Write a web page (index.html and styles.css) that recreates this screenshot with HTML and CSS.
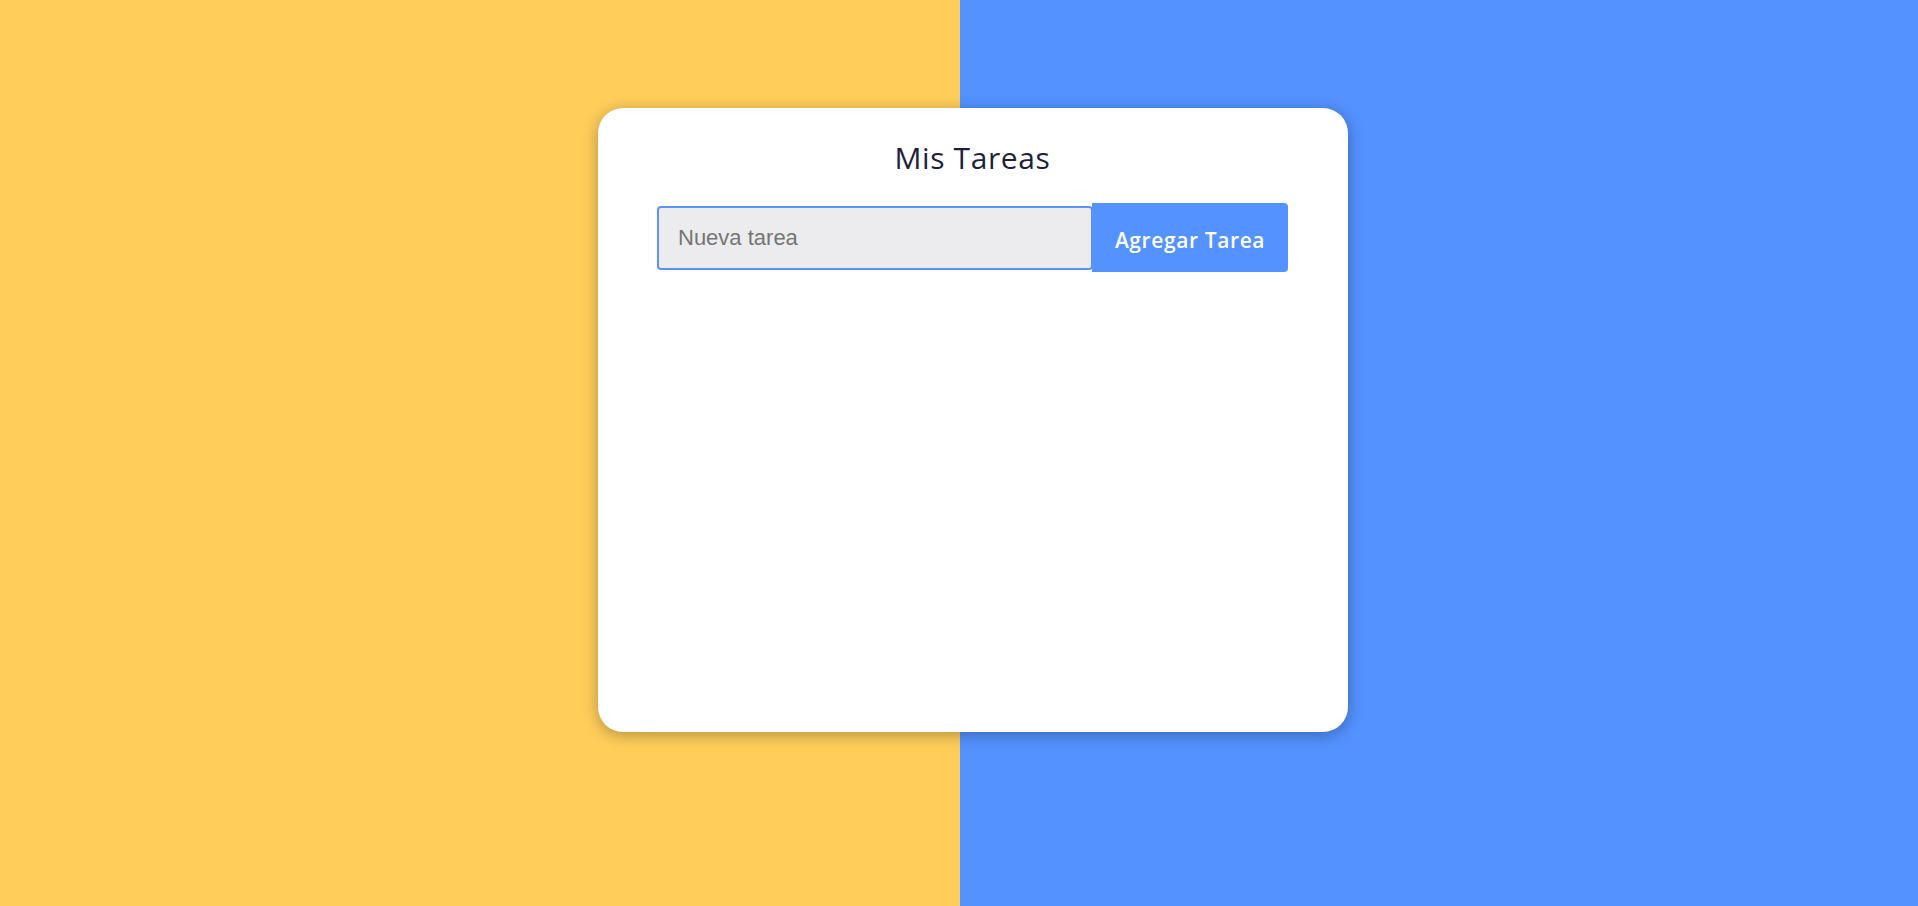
FILE: index.html
```html
<!DOCTYPE html>
<html lang="es">
<head>
<meta charset="utf-8">
<title>Mis Tareas</title>
<link rel="stylesheet" href="styles.css">
</head>
<body>
<main class="page">
  <section class="card">
    <h1 class="title">Mis Tareas</h1>
    <form class="task-form">
      <input class="task-input" type="text" placeholder="Nueva tarea">
      <button class="task-button" type="button">Agregar Tarea</button>
    </form>
    <ul class="task-list"></ul>
  </section>
</main>
</body>
</html>
```
FILE: styles.css
```css
* { box-sizing: border-box; }

html, body {
  margin: 0;
  height: 100%;
}

body {
  background: linear-gradient(to right, #ffce5a 0, #ffce5a 960px, #5492ff 960px, #5492ff 100%);
  font-family: "Open Sans", Lato, sans-serif;
  overflow: hidden;
}

.page {
  display: flex;
  justify-content: center;
  padding: 108px 0 0 28px;
}

.card {
  width: 750px;
  height: 624px;
  background: #ffffff;
  border-radius: 25px;
  box-shadow: 0 3px 16px rgba(0, 0, 0, 0.3);
  padding: 32px 60px 0 59px;
}

.title {
  margin: 0;
  text-align: center;
  font-size: 30px;
  line-height: 36px;
  font-weight: 500;
  letter-spacing: 0.6px;
  color: #1f1f3b;
}

.task-form {
  display: flex;
  align-items: center;
  margin-top: 27px;
}

.task-input {
  flex: 1;
  height: 64px;
  border: 2px solid #5a94f7;
  border-radius: 4px;
  background: #ececee;
  padding: 0 19px;
  font-family: "Liberation Sans", Arial, sans-serif;
  font-size: 22px;
  color: #333;
  outline: none;
}

.task-input::placeholder {
  color: #757575;
}

.task-button {
  width: 196px;
  height: 69px;
  border: none;
  border-radius: 0 4px 4px 0;
  background: #5492ff;
  color: #ffffff;
  font-family: "Open Sans", Lato, sans-serif;
  font-size: 21px;
  font-weight: 600;
  letter-spacing: 0.6px;
  margin-left: -1px;
  padding: 5px 0 0;
}

.task-list {
  margin: 0;
  padding: 0;
  list-style: none;
}
```
